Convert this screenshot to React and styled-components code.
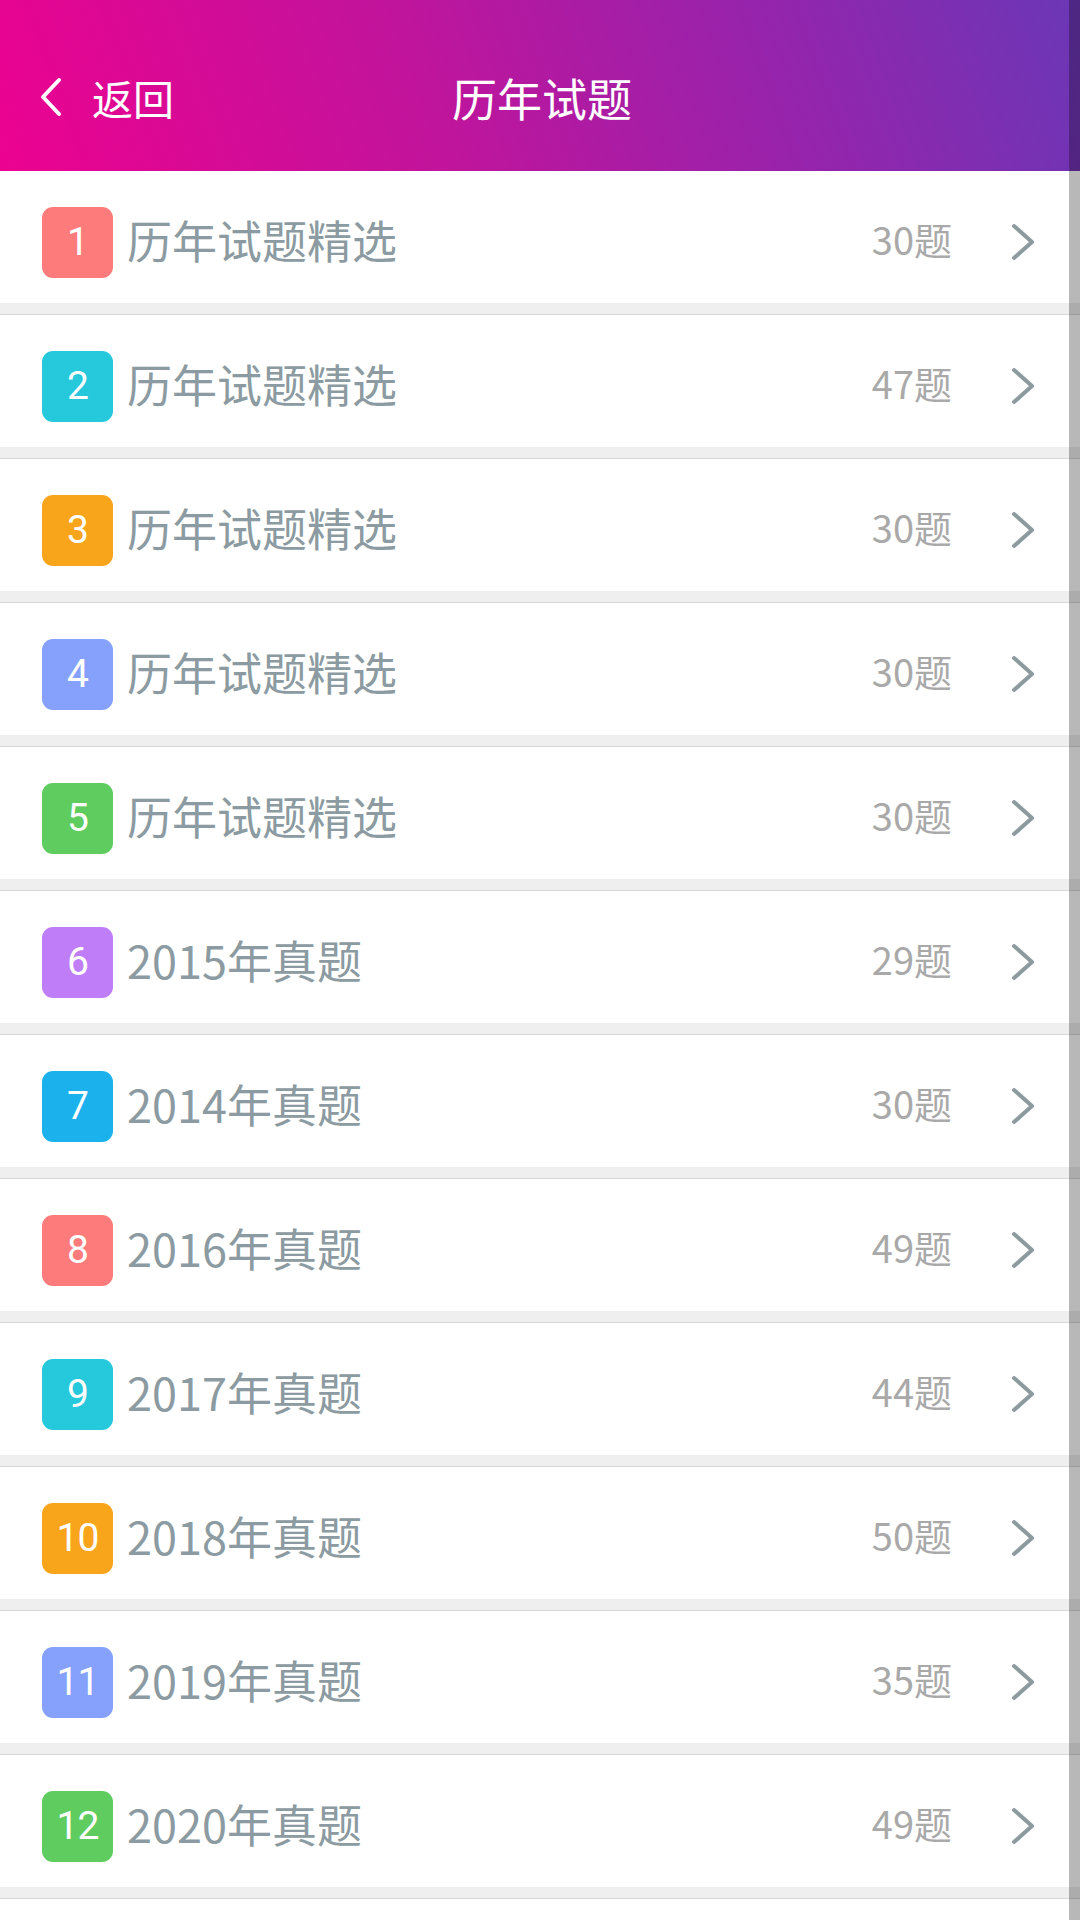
import React from "react";
import styled, { createGlobalStyle } from "styled-components";

const Global = createGlobalStyle`
  html, body {
    margin: 0;
    padding: 0;
    overflow: hidden;
    background: #efefef;
    font-family: "Noto Sans CJK SC", "Noto Sans", sans-serif;
  }
  * { box-sizing: border-box; }
`;

const Page = styled.div`
  width: 1080px;
  height: 1920px;
  overflow: hidden;
  display: flex;
  flex-direction: column;
  background: #efefef;
`;

const Header = styled.header`
  height: 171px;
  flex: none;
  padding-top: 23px;
  display: grid;
  grid-template-columns: 1fr auto 1fr;
  align-items: center;
  background: linear-gradient(70deg, #ec0290 0%, #c0149c 40%, #9524ac 72%, #6a37b6 100%);
  color: #fff;
`;

const Back = styled.div`
  display: flex;
  align-items: center;
  gap: 28px;
  padding-left: 38px;
  font-size: 41px;
  line-height: 1;
`;

const Title = styled.h1`
  margin: 0;
  font-size: 45px;
  font-weight: 400;
  line-height: 1;
  padding-left: 4px;
`;

const List = styled.div`
  display: flex;
  flex-direction: column;
  gap: 11px;
`;

const Item = styled.div`
  flex: none;
  height: 133px;
  background: #fff;
  border-top: 1px solid #d9d9d9;
  display: flex;
  align-items: center;
  padding: 10px 44px 0 42px;
  &:first-child {
    height: 132px;
    border-top: none;
  }
`;

const Badge = styled.div`
  flex: none;
  width: 71px;
  height: 71px;
  border-radius: 11px;
  background: ${(p) => p.$color};
  color: #fff;
  display: flex;
  align-items: center;
  justify-content: center;
  font-family: Roboto, "Noto Sans", sans-serif;
  font-size: 39px;
  letter-spacing: -1px;
`;

const Name = styled.div`
  flex: 1;
  margin: 0 0 6px 14px;
  font-size: 45px;
  color: #8b9ba1;
  line-height: 1;
`;

const Count = styled.div`
  font-size: 38px;
  color: #a9a9a9;
  line-height: 1;
  margin: 0 58px 6px 0;
`;

const ScrollThumb = styled.div`
  position: fixed;
  top: 0;
  right: 0;
  width: 11px;
  height: 1920px;
  background: rgba(0, 0, 0, 0.28);
`;

const Chevron = ({ color = "#8d9b9f", w = 26, h = 40, left = false }) => (
  <svg width={w} height={h} viewBox="0 0 26 40" fill="none">
    <polyline
      points={left ? "21,3 5,20 21,37" : "4,4 22,20 4,36"}
      stroke={color}
      strokeWidth="4"
      strokeLinecap="round"
      strokeLinejoin="round"
    />
  </svg>
);

const colors = ["#fd7b7b", "#26c8dc", "#f9a51b", "#85a1fc", "#5fcc5f", "#bf7ef8", "#1bb1ec"];

const rows = [
  ["历年试题精选", 30],
  ["历年试题精选", 47],
  ["历年试题精选", 30],
  ["历年试题精选", 30],
  ["历年试题精选", 30],
  ["2015年真题", 29],
  ["2014年真题", 30],
  ["2016年真题", 49],
  ["2017年真题", 44],
  ["2018年真题", 50],
  ["2019年真题", 35],
  ["2020年真题", 49],
];

export default function App() {
  return (
    <Page>
      <Global />
      <Header>
        <Back>
          <Chevron color="#fff" w={26} h={40} left />
          <span>返回</span>
        </Back>
        <Title>历年试题</Title>
        <div />
      </Header>
      <List>
        {rows.map(([name, n], i) => (
          <Item key={i}>
            <Badge $color={colors[i % colors.length]}>{i + 1}</Badge>
            <Name>{name}</Name>
            <Count>{n}题</Count>
            <Chevron />
          </Item>
        ))}
        <Item />
      </List>
      <ScrollThumb />
    </Page>
  );
}
